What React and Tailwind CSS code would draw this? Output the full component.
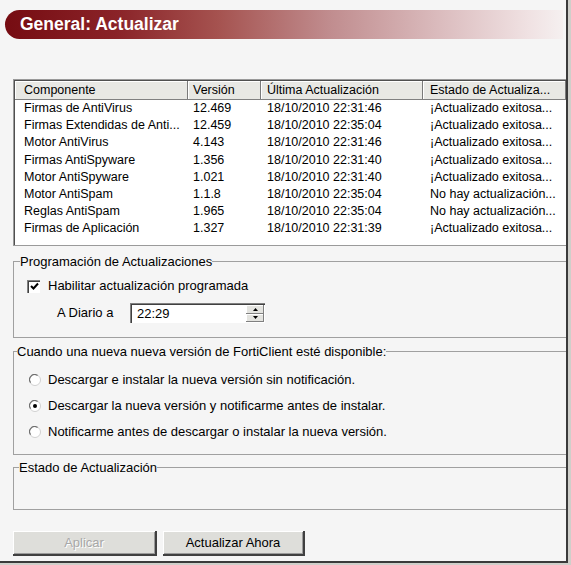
import React from "react";

const rows = [
  ["Firmas de AntiVirus", "12.469", "18/10/2010 22:31:46", "¡Actualizado exitosa..."],
  ["Firmas Extendidas de Anti...", "12.459", "18/10/2010 22:35:04", "¡Actualizado exitosa..."],
  ["Motor AntiVirus", "4.143", "18/10/2010 22:31:46", "¡Actualizado exitosa..."],
  ["Firmas AntiSpyware", "1.356", "18/10/2010 22:31:40", "¡Actualizado exitosa..."],
  ["Motor AntiSpyware", "1.021", "18/10/2010 22:31:40", "¡Actualizado exitosa..."],
  ["Motor AntiSpam", "1.1.8", "18/10/2010 22:35:04", "No hay actualización..."],
  ["Reglas AntiSpam", "1.965", "18/10/2010 22:35:04", "No hay actualización..."],
  ["Firmas de Aplicación", "1.327", "18/10/2010 22:31:39", "¡Actualizado exitosa..."],
];

const pads = ["pl-[9px]", "pl-[5px]", "pl-[6px]", "pl-[7px]"];

function Radio({ checked, label }) {
  return (
    <div className="flex items-center h-[16px] ml-[15px]">
      <svg width="12" height="12" viewBox="0 0 12 12" className="shrink-0">
        <circle cx="6" cy="6" r="5.5" fill="#ffffff" stroke="#d0d0d0" />
        <path d="M1.6 8.6 A5 5 0 0 1 8.6 1.6" stroke="#707070" strokeWidth="1.2" fill="none" />
        {checked && <circle cx="6" cy="6" r="2" fill="#000" />}
      </svg>
      <span className="ml-[7px] whitespace-nowrap">{label}</span>
    </div>
  );
}

export default function App() {
  return (
    <div className="w-[571px] h-[565px] bg-[#cfcfca] overflow-hidden font-['Liberation_Sans',Arial,sans-serif] text-[13px] text-black">
      <div className="w-[568px] h-[563px] bg-[#f5f5f5] border-r-2 border-b-2 border-[#3a3a3a] overflow-hidden flex flex-col">
        {/* Title bar */}
        <div className="mt-[10px] ml-[5px] mr-[3px] h-[29px] rounded-l-[15px] bg-[linear-gradient(to_right,#760c12_0%,#8a2328_20%,#a5524f_38%,#c08c8e_58%,#dbbcbe_78%,#f0e2e3_94%,#f5f0f0_100%)] flex items-center pl-[15px]">
          <span className="text-white font-bold text-[17.5px] leading-none">General: Actualizar</span>
        </div>

        {/* List view */}
        <div className="mt-[40px] ml-[13px] h-[167px] border-t border-l border-b border-[#9a9a9a] flex flex-col text-[12.5px]">
          <div className="flex-1 border-t border-l border-[#505050] bg-white flex flex-col">
            <div className="grid grid-cols-[173px_73px_162px_1fr] h-[19px] bg-[#e8e8e4] border-b border-[#808080]">
              {["Componente", "Versión", "Última Actualización", "Estado de Actualiza..."].map((h, i) => (
                <div
                  key={h}
                  className={`${pads[i]} flex items-center whitespace-nowrap overflow-hidden border-r border-[#7a7a7a] shadow-[inset_1px_1px_0_#ffffff]`}
                >
                  {h}
                </div>
              ))}
            </div>
            {rows.map((r, ri) => (
              <div key={ri} className="grid grid-cols-[173px_73px_162px_1fr] h-[17.15px]">
                {r.map((c, ci) => (
                  <div key={ci} className={`${pads[ci]} flex items-center whitespace-nowrap overflow-hidden`}>
                    {c}
                  </div>
                ))}
              </div>
            ))}
          </div>
        </div>

        {/* Programación */}
        <fieldset className="mt-[8px] ml-[13px] border-t border-l border-b border-[#a0a0a0] pb-[14px]">
          <legend className="ml-[6px] leading-[15px] px-0">Programación de Actualizaciones</legend>
          <div className="mt-[9px] ml-[13px] h-[16px] flex items-center">
            <div className="w-[13px] h-[13px] bg-white border-t border-l border-[#808080] shadow-[inset_1px_1px_0_#404040] flex items-center justify-center">
              <svg width="9" height="9" viewBox="0 0 9 9">
                <path d="M1 4 L3.5 6.5 L8 1.5" stroke="#000" strokeWidth="2" fill="none" />
              </svg>
            </div>
            <span className="ml-[8px] whitespace-nowrap">Habilitar actualización programada</span>
          </div>
          <div className="mt-[9px] ml-[43px] h-[20px] flex items-center">
            <span className="w-[73px] whitespace-nowrap">A Diario a</span>
            <div className="w-[135px] h-[20px] bg-white border-t border-l border-[#808080] shadow-[inset_1px_1px_0_#404040] flex">
              <div className="flex-1 pl-[6px] flex items-center">22:29</div>
              <div className="w-[19px] flex flex-col py-[1px] pr-[1px] gap-0">
                <div className="flex-1 bg-[#e4e4e0] shadow-[inset_-1px_-1px_0_#808080,inset_1px_1px_0_#ffffff] flex items-center justify-center">
                  <svg width="5" height="3" viewBox="0 0 5 3"><path d="M0 3 L2.5 0 L5 3 Z" fill="#000" /></svg>
                </div>
                <div className="flex-1 bg-[#e4e4e0] shadow-[inset_-1px_-1px_0_#808080,inset_1px_1px_0_#ffffff] flex items-center justify-center">
                  <svg width="5" height="3" viewBox="0 0 5 3"><path d="M0 0 L2.5 3 L5 0 Z" fill="#000" /></svg>
                </div>
              </div>
            </div>
          </div>
        </fieldset>

        {/* Cuando */}
        <fieldset className="mt-[6px] ml-[13px] border-t border-l border-b border-[#a0a0a0] pb-[14px]">
          <legend className="ml-[3px] leading-[15px] px-0">Cuando una nueva nueva versión de FortiClient esté disponible:</legend>
          <div className="mt-[13px] flex flex-col gap-[10px]">
            <Radio label="Descargar e instalar la nueva versión sin notificación." />
            <Radio checked label="Descargar la nueva versión y notificarme antes de instalar." />
            <Radio label="Notificarme antes de descargar o instalar la nueva versión." />
          </div>
        </fieldset>

        {/* Estado */}
        <fieldset className="mt-[5px] ml-[13px] border-t border-l border-b border-[#a0a0a0]">
          <legend className="ml-[5px] leading-[15px] px-0">Estado de Actualización</legend>
          <div className="h-[34px]" />
        </fieldset>

        {/* Buttons */}
        <div className="mt-[21px] ml-[13px] flex gap-[6px]">
          <div className="w-[144px] h-[25px] bg-[#dededa] border-r-2 border-b-2 border-[#404040] shadow-[inset_1px_1px_0_#ffffff,inset_-1px_-1px_0_#9a9a9a] flex items-center justify-center text-[#a8a8a8] [text-shadow:1px_1px_0_#ffffff]">
            Aplicar
          </div>
          <div className="w-[142px] h-[25px] bg-[#dededa] border-r-2 border-b-2 border-[#404040] shadow-[inset_1px_1px_0_#ffffff,inset_-1px_-1px_0_#9a9a9a] flex items-center justify-center">
            Actualizar Ahora
          </div>
        </div>
      </div>
    </div>
  );
}
